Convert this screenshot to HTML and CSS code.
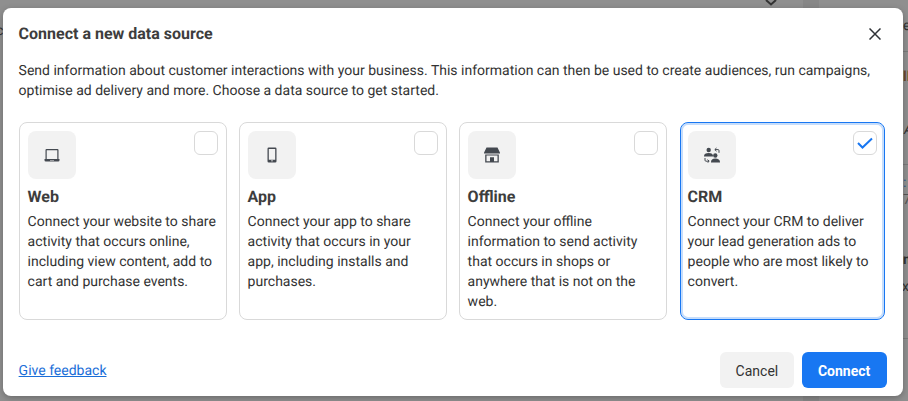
FILE: index.html
```html
<!DOCTYPE html>
<html lang="en">
<head>
<meta charset="utf-8">
<title>Connect a new data source</title>
<link rel="stylesheet" href="styles.css">
</head>
<body>
<div class="backdrop">
  <div class="bg-panel"></div>
  <div class="bg-line bg-l1"></div>
  <div class="bg-line bg-l2"></div>
  <div class="bg-line bg-l3"></div>
  <svg class="bg-chevron" width="12" height="6" viewBox="0 0 12 6"><path d="M1 0l5 4.500L11 0" fill="none" stroke="#333" stroke-width="2"/></svg>
  <span class="bg-text bg-t1">e</span>
  <span class="bg-text bg-t2">c</span>
  <span class="bg-text bg-t3">ll</span>
  <span class="bg-text bg-t4">A</span>
  <span class="bg-text bg-t5">:</span>
  <span class="bg-text bg-t6">7</span>
  <span class="bg-text bg-t7">n</span>
  <span class="bg-text bg-t8">x</span>
  <main class="modal">
    <header class="modal-head">
      <h1 class="modal-title">Connect a new data source</h1>
      <button class="close" aria-label="Close">
        <svg width="12" height="12" viewBox="0 0 12 12"><path d="M.5.5l11 11M11.500.5l-11 11" stroke="#2f3237" stroke-width="1.500" fill="none"/></svg>
      </button>
    </header>
    <p class="intro">Send information about customer interactions with your business. This information can then be used to create audiences, run campaigns, optimise ad delivery and more. Choose a data source to get started.</p>
    <section class="cards">
      <article class="card">
        <div class="card-top">
          <div class="icon-box">
            <svg width="16" height="16" viewBox="0 0 16 16"><path fill="#444950" fill-rule="evenodd" d="M1.500 3A1 1 0 0 1 2.500 2h11a1 1 0 0 1 1 1v9h1v1.200a1.300 1.300 0 0 1-1.300 1.300H1.800A1.300 1.300 0 0 1 .5 13.200V12h1zM2.700 3.200V12h10.600V3.200zM6 13v.6h4V13z"/></svg>
          </div>
          <span class="check"></span>
        </div>
        <h2 class="card-title">Web</h2>
        <p class="card-text">Connect your website to share activity that occurs online, including view content, add to cart and purchase events.</p>
      </article>
      <article class="card">
        <div class="card-top">
          <div class="icon-box">
            <svg width="16" height="16" viewBox="0 0 16 16"><path fill="#444950" fill-rule="evenodd" d="M4.800.5h6.400A1.300 1.300 0 0 1 12.500 1.800v12.400a1.300 1.300 0 0 1-1.300 1.300H4.800a1.300 1.300 0 0 1-1.300-1.300V1.800A1.300 1.300 0 0 1 4.800.5zM4.800 2v10.800h6.400V2zM7 13.500v.8h2v-.8z"/></svg>
          </div>
          <span class="check"></span>
        </div>
        <h2 class="card-title">App</h2>
        <p class="card-text">Connect your app to share activity that occurs in your app, including installs and purchases.</p>
      </article>
      <article class="card">
        <div class="card-top">
          <div class="icon-box">
            <svg width="16" height="16" viewBox="0 0 16 16"><path fill="#444950" fill-rule="evenodd" d="M2.500.5h11L16 5.800v.7H0v-.7zM1.200 7.500h13.600V15.500H1.200zM2.500 8.600v5.700h3.500v-4h4v4h3.500V8.600z"/></svg>
          </div>
          <span class="check"></span>
        </div>
        <h2 class="card-title">Offline</h2>
        <p class="card-text">Connect your offline information to send activity that occurs in shops or anywhere that is not on the web.</p>
      </article>
      <article class="card card-on">
        <div class="card-top">
          <div class="icon-box">
            <svg width="16" height="16" viewBox="0 0 16 16"><g fill="#444950"><circle cx="4.700" cy="3" r="2.200"/><path d="M0 9.200C0 7.200 1.800 6 4.700 6s4.300 1 4.300 3v.5H0z"/><circle cx="11.300" cy="8.500" r="2.200"/><path d="M7 15c0-2.200 1.500-3.500 4.300-3.500S16 12.800 16 15v.5H7z"/></g><path d="M15 5.800V3.600a1 1 0 0 0-1-1h-3M12.500 1L10.800 2.600l1.700 1.600M1 11v2.200a1 1 0 0 0 1 1h3M3.500 12.600l1.700 1.600-1.700 1.600" fill="none" stroke="#444950" stroke-width="1"/></svg>
          </div>
          <span class="check">
            <svg width="16" height="12" viewBox="0 0 16 12"><path d="M1 6l4.500 4.500L15 1.500" fill="none" stroke="#1877f2" stroke-width="2"/></svg>
          </span>
        </div>
        <h2 class="card-title">CRM</h2>
        <p class="card-text">Connect your CRM to deliver your lead generation ads to people who are most likely to convert.</p>
      </article>
    </section>
    <footer class="modal-foot">
      <a class="feedback" href="#">Give feedback</a>
      <div class="actions">
        <button class="btn btn-cancel">Cancel</button>
        <button class="btn btn-primary">Connect</button>
      </div>
    </footer>
  </main>
</div>
</body>
</html>
```

FILE: styles.css
```css
* { box-sizing: border-box; }
html, body { margin: 0; padding: 0; }
body {
  font-family: Roboto, "Liberation Sans", sans-serif;
  font-size: 14px;
  line-height: 20px;
  color: #333;
  text-rendering: geometricPrecision;
}
.backdrop {
  position: relative;
  width: 908px;
  height: 401px;
  overflow: hidden;
  background: #8f8f8f;
  padding: 8px 5px 5px 3px;
}
.bg-panel {
  position: absolute;
  left: 803px;
  top: 0;
  width: 16px;
  height: 401px;
  background: #878787;
}
.bg-line {
  position: absolute;
  left: 903px;
  width: 5px;
  height: 1px;
  background: #7a7a7a;
}
.bg-l1 { top: 51px; }
.bg-l2 { top: 164px; }
.bg-l3 { top: 338px; }
.bg-chevron { position: absolute; left: 765px; top: 0; }
.bg-text { position: absolute; font-size: 14px; line-height: 14px; color: #333; }
.bg-t1 { left: 903px; top: 19px; }
.bg-t2 { left: -4px; top: 24px; }
.bg-t3 { left: 903px; top: 70px; color: #6b4a2a; font-weight: 700; }
.bg-t4 { left: 904px; top: 123px; font-style: italic; }
.bg-t5 { left: 903px; top: 176px; color: #2a5a8a; }
.bg-t6 { left: 903px; top: 193px; color: #555; }
.bg-t7 { left: 903px; top: 253px; font-weight: 700; }
.bg-t8 { left: 902px; top: 280px; }
.modal {
  position: relative;
  display: flex;
  flex-direction: column;
  width: 900px;
  height: 388px;
  margin-left: -.4px;
  padding: 16px 16px 8px;
  background: #fff;
  border-radius: 8px;
  box-shadow: 0 2px 6px rgba(0, 0, 0, .25);
}
.modal-head {
  display: flex;
  align-items: center;
  justify-content: space-between;
  height: 20px;
}
.modal-title {
  margin: 0;
  font-size: 16px;
  line-height: 20px;
  font-weight: 700;
  color: #3d3d3d;
}
.close {
  display: flex;
  padding: 0;
  margin-right: 6px;
  border: 0;
  background: none;
}
.intro {
  margin: 17px 0 0;
  width: 868px;
  color: #333;
}
.cards {
  display: grid;
  grid-template-columns: repeat(3, 208px) 206px;
  gap: 12px;
  margin-top: 21px;
}
.card {
  height: 198px;
  padding: 8px;
  border: 1px solid #d9d9d9;
  border-radius: 8px;
  background: #fff;
}
.card-on {
  margin-left: 1px;
  padding: 8px 7px;
  border-color: #1877f2;
  box-shadow: inset 0 0 0 2px #c6ddfb;
}
.card-top {
  display: flex;
  justify-content: space-between;
  align-items: flex-start;
}
.icon-box {
  display: flex;
  align-items: center;
  justify-content: center;
  width: 48px;
  height: 48px;
  border-radius: 8px;
  background: #f2f2f2;
}
.check {
  display: flex;
  align-items: center;
  justify-content: center;
  width: 24px;
  height: 24px;
  border: 1px solid #d9d9d9;
  border-radius: 6px;
  background: #fff;
}
.card-title {
  margin: 8px 0 0;
  font-size: 16px;
  line-height: 20px;
  font-weight: 700;
  color: #3d3d3d;
}
.card-text {
  margin: 5px 0 0;
  color: #333;
}
.modal-foot {
  display: flex;
  align-items: center;
  justify-content: space-between;
  margin-top: auto;
}
.feedback {
  margin-top: 2px;
  color: #1a6ed8;
  text-decoration: underline;
}
.actions {
  display: flex;
  gap: 8px;
}
.btn {
  height: 36px;
  padding: 1px 16px 0;
  border: 0;
  border-radius: 6px;
  font-family: inherit;
  font-size: 14px;
}
.btn-cancel {
  width: 74px;
  background: #f2f2f2;
  color: #333;
}
.btn-primary {
  width: 85px;
  background: #1877f2;
  color: #fff;
  font-weight: 700;
}
```
